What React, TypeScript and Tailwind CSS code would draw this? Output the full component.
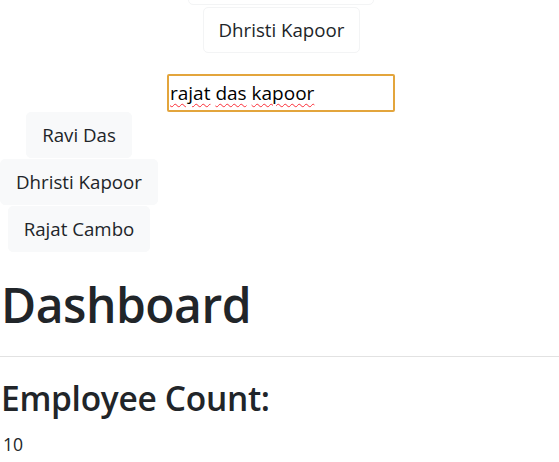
import React from 'react';

const names = ['Ravi Das', 'Dhristi Kapoor', 'Rajat Cambo'];

function NameButton({ label, light, className = '' }: { label?: string; light?: boolean; className?: string }) {
  return (
    <button
      className={`h-[46px] px-[15px] rounded-[5px] border whitespace-nowrap text-[18.7px] leading-none text-[#212529] ${
        light ? 'bg-[#f8f9fa] border-[#f8f9fa]' : 'bg-white border-[#f3f4f5]'
      } ${className}`}
    >
      {label}
    </button>
  );
}

export default function App() {
  const query = ['rajat', 'das', 'kapoor'];

  return (
    <div className="min-h-screen bg-white text-[#212529] font-['Open_Sans',sans-serif] overflow-hidden">
      <div className="flex flex-col items-center -mt-[41px] pl-[3px] gap-[2px]">
        {/* previous result, scrolled out of view */}
        <NameButton className="w-[186px]" />
        <NameButton label="Dhristi Kapoor" className="w-[157px]" />
        <div className="mt-[19px] w-[228px] h-[38px] border-2 border-[#e3a53c] rounded-[2px] flex items-center pl-[1px] text-[19px] text-black">
          {query.map((w, i) => (
            <React.Fragment key={w}>
              <span className="underline decoration-wavy decoration-red-500 decoration-1 underline-offset-[3px]">{w}</span>
              {i < query.length - 1 ? <span>&nbsp;</span> : null}
            </React.Fragment>
          ))}
        </div>
      </div>

      <div className="w-[158px] flex flex-col items-center gap-[1px]">
        {names.map((n) => (
          <NameButton key={n} label={n} light />
        ))}
      </div>

      <h1 className="mt-[24px] px-[1px] text-[48px] leading-[1.2] font-semibold tracking-[-0.5px]">Dashboard</h1>
      <hr className="mt-[22px] border-t border-[#e2e2e2]" />
      <h2 className="mt-[21px] px-[1px] text-[33.5px] leading-[1.2] font-semibold tracking-[-0.3px]">Employee Count:</h2>
      <p className="mt-[13px] px-[3px] text-[17.6px]">10</p>
    </div>
  );
}
